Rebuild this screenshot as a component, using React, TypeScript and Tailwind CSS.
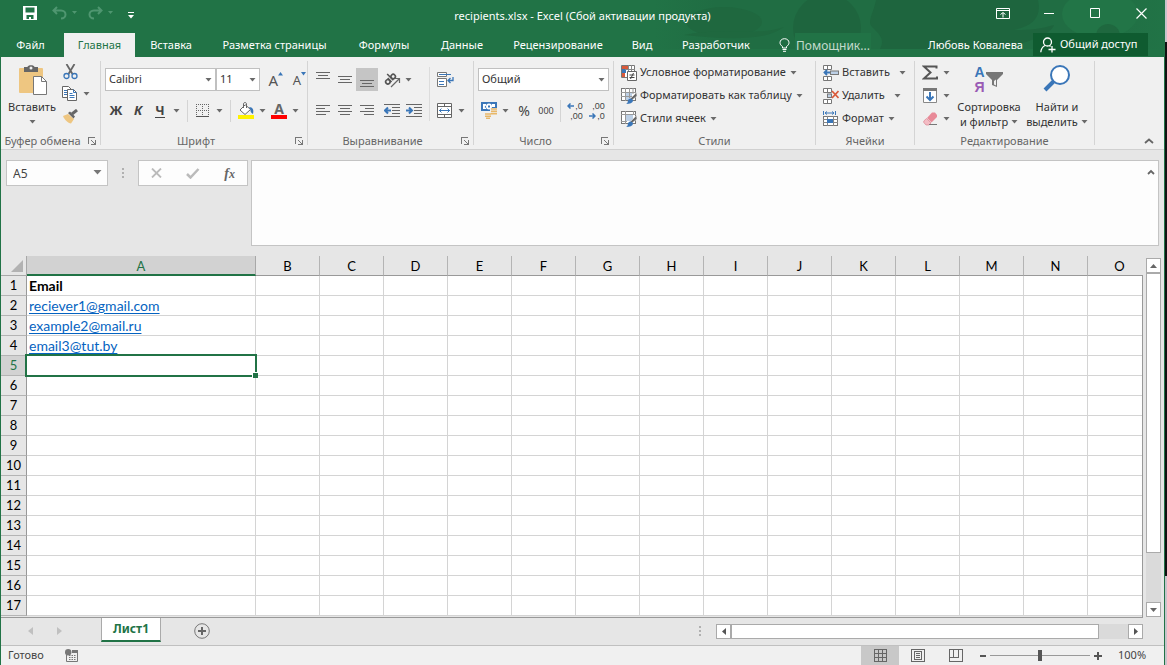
import type { ReactNode } from 'react';

const tabs: [string, string][] = [
  ['Файл', 'w-[59px]'],
  ['Главная', 'w-[71px]'],
  ['Вставка', 'w-[72px]'],
  ['Разметка страницы', 'w-[135px]'],
  ['Формулы', 'w-[84px]'],
  ['Данные', 'w-[72px]'],
  ['Рецензирование', 'w-[120px]'],
  ['Вид', 'w-[48px]'],
  ['Разработчик', 'w-[100px]'],
];

const columns = 'ABCDEFGHIJKLMNO'.split('');
const cells: Record<number, string> = {
  1: 'Email',
  2: 'reciever1@gmail.com',
  3: 'example2@mail.ru',
  4: 'email3@tut.by',
};
const rows = Array.from({ length: 17 }, (_, i) => i + 1);
const ACTIVE_ROW = 5;

function Svg({ w, h, children, crisp = false }: { w: number; h: number; children: ReactNode; crisp?: boolean }) {
  return (
    <svg width={w} height={h} viewBox={`0 0 ${w} ${h}`} fill="none" className="shrink-0" shapeRendering={crisp ? 'crispEdges' : 'auto'} aria-hidden="true">
      {children}
    </svg>
  );
}

function Caret() {
  return (
    <Svg w={7} h={4}>
      <path d="M.5 0h6L3.500 3.500z" fill="#6a6a6a" />
    </Svg>
  );
}

function CaretButton({ label, wide = false }: { label: string; wide?: boolean }) {
  return (
    <button aria-label={label} className={`flex h-[23px] items-center justify-center ${wide ? 'w-[14px]' : 'w-[11px]'}`}>
      <Caret />
    </button>
  );
}

function Tool({ label, children, active = false }: { label: string; children: ReactNode; active?: boolean }) {
  return (
    <button aria-label={label} className={`flex h-[23px] w-[22px] items-center justify-center ${active ? 'bg-[#c5c5c5]' : ''}`}>
      {children}
    </button>
  );
}

function Combo({ label, value, width }: { label: string; value: string; width: string }) {
  return (
    <div className={`relative h-[23px] ${width}`}>
      <select aria-label={label} defaultValue={value} className="h-full w-full appearance-none border border-[#c0c0c0] bg-white pl-[3px] text-[#333]">
        <option>{value}</option>
      </select>
      <span className="pointer-events-none absolute top-[10px] right-1">
        <Caret />
      </span>
    </div>
  );
}

function Divider() {
  return <div className="mr-1 ml-[5px] h-[22px] w-px bg-[#d4d4d4]" />;
}

function Group({ title, width, launcher = false, children }: { title: string; width: string; launcher?: boolean; children: ReactNode }) {
  return (
    <>
      <section aria-label={title} className={`flex shrink-0 flex-col pt-1 ${width}`}>
        <div className="flex h-[73px]">{children}</div>
        <div className="flex h-[14px] items-center text-[#666]">
          <h2 className="flex-1 text-center whitespace-nowrap">{title}</h2>
          {launcher && (
            <button aria-label={`${title}: параметры`} className="w-4 pl-1">
              <Svg w={8} h={8} crisp>
                <path d="M0.500 7V0.500H7M3 3l4 4M7.500 3v4.500H3" stroke="#777" />
              </Svg>
            </button>
          )}
        </div>
      </section>
      <div className="mt-1 h-[84px] w-px shrink-0 bg-[#d4d4d4]" />
    </>
  );
}

function Lines({ rows: list }: { rows: [number, number, number][] }) {
  return (
    <Svg w={14} h={16} crisp>
      {list.map(([x, y, w]) => (
        <rect key={y} x={x} y={y} width={w} height={1} fill="#666" />
      ))}
    </Svg>
  );
}

function Indent({ right = false }: { right?: boolean }) {
  return (
    <Svg w={16} h={14}>
      <path d="M0 .5h16M8 3.500h8M8 6.500h8M8 9.500h8M0 12.500h16" stroke="#666" shapeRendering="crispEdges" />
      {right ? <path d="M0 6.500h6M3 3.500l3 3-3 3" stroke="#3a76b8" strokeWidth="2" /> : <path d="M1 6.500h6M4 3.500l-3 3 3 3" stroke="#3a76b8" strokeWidth="2" />}
    </Svg>
  );
}

function StyleRow({ icon, text, gap }: { icon: ReactNode; text: string; gap: string }) {
  return (
    <button className="flex h-[23px] items-center whitespace-nowrap text-[#333]">
      {icon}
      <span className="ml-[3px]">{text}</span>
      <span className={gap}>
        <Caret />
      </span>
    </button>
  );
}

function TableBrush({ cell = false }: { cell?: boolean }) {
  return (
    <Svg w={16} h={16}>
      <rect x=".5" y=".5" width="14" height="12" fill="#fff" stroke="#777" />
      {cell ? (
        <>
          <rect x="4" y="4" width="8" height="6" fill="#bdd0e6" />
          <path d="M4.500 0v13M0 3.500h15M12.500 0v4M0 10.500h6" stroke="#999" />
        </>
      ) : (
        <>
          <rect x="5" y="5" width="6" height="7" fill="#bdd0e6" />
          <path d="M4.500 0v13M8.500 0v10M12 0v6M0 4.500h15M0 8.500h11" stroke="#999" />
        </>
      )}
      <path d="M15.500 4.500L9 11l1.500 1.500L16 8z" fill="#666" stroke="#f0f0f0" strokeWidth=".5" />
      <path d="M9.500 10.500c1.500 0 2.500 1 2.500 2.500-.5 2-3 3-7 3 2-1 1.500-2 2-3.500.3-1.200 1.300-2 2.500-2z" fill="#3a76b8" />
    </Svg>
  );
}

function CellsIcon({ kind }: { kind: 'insert' | 'delete' | 'format' }) {
  if (kind === 'format') {
    return (
      <Svg w={16} h={16}>
        <path d="M.5 0v4M12.500 0v4M2 2h9" stroke="#3a76b8" />
        <path d="M4 0.500L2 2 4 3.500M9 .5l2 1.500L9 3.500" stroke="#3a76b8" />
        <rect x=".5" y="5.500" width="14" height="9" fill="#fff" stroke="#777" />
        <path d="M4.500 5v10M10.500 5v10M0 8.500h15M0 11.500h15" stroke="#888" />
        <rect x="4" y="8" width="6" height="4" fill="#3a76b8" />
      </Svg>
    );
  }
  return (
    <Svg w={16} h={16}>
      <path d="M.5 .5h8v4h-8zM4.500 .5v4M.5 11.500h8v4h-8zM4.500 11.500v4" fill="#fff" stroke="#777" />
      {kind === 'insert' ? (
        <>
          <rect x="7.500" y="6" width="8" height="3.500" fill="#bdd0e6" stroke="#777" />
          <path d="M7 7.500H1M4 5L1.500 7.500 4 10" stroke="#3a76b8" strokeWidth="1.800" />
        </>
      ) : (
        <>
          <rect x="4.500" y="6" width="4" height="3.500" fill="#bdd0e6" stroke="#777" />
          <path d="M9 3l6.500 7M15.500 3L9 10" stroke="#d9593a" strokeWidth="1.700" />
        </>
      )}
    </Svg>
  );
}

function TitleBar() {
  return (
    <header className="relative bg-[#217346] text-white">
      <svg className="absolute top-0 right-0" width="510" height="57" viewBox="0 0 510 57" aria-hidden="true">
        <defs>
          <linearGradient id="shade" x1="0" x2="1" y1="0" y2="0">
            <stop offset="0" stopColor="#217346" />
            <stop offset=".12" stopColor="#206d43" />
            <stop offset=".85" stopColor="#206d43" />
            <stop offset="1" stopColor="#217346" />
          </linearGradient>
        </defs>
        <path d="M0 0h510v49H0z" fill="url(#shade)" />
        <ellipse cx="70" cy="22" rx="38" ry="15" fill="#1f683f" />
        <path d="M30 35c35-8 70 2 100-8-20 15-60 12-100 8z" fill="#1f683f" />
        <circle cx="173" cy="28" r="34" fill="#1e653e" />
        <path d="M222 0h162c4 18-6 26-24 30 16 0 26-1 40-5-4 12-40 24-80 24H226c8-14-10-20-10-26 0-7 4-12 6-23z" fill="#1e653e" />
        <ellipse cx="446" cy="14" rx="38" ry="24" fill="#227547" />
        <circle cx="454" cy="36" r="12" fill="#1f683f" />
        <path d="M0 49h510v8H0z" fill="#217346" />
      </svg>
      <div className="relative grid h-[33px] grid-cols-[1fr_auto_1fr] items-center">
        <div className="flex h-full items-start gap-[11px] pt-1 pl-[22px]">
          <button aria-label="Сохранить" className="mr-1 flex h-[18px] items-center">
            <Svg w={14} h={14}>
              <path d="M0 0h14v14H0z" fill="#fff" />
              <path d="M2.500 1.500h9v5h-9zM3.500 9h7v4H8v-2H6v2H3.500z" fill="#217346" />
            </Svg>
          </button>
          <div className="flex h-[18px] items-center gap-[5px] text-[#4f9670]">
            <button aria-label="Отменить">
              <Svg w={15} h={14}>
                <path d="M5 1L1.500 4.500 5 8M1.500 4.500H9c3 0 4.500 2 4.500 4S12 12.500 9 12.500" stroke="currentColor" strokeWidth="2" />
              </Svg>
            </button>
            <Svg w={5} h={4}><path d="M0 0h5L2.500 3z" fill="currentColor" /></Svg>
          </div>
          <div className="flex h-[18px] items-center gap-[5px] text-[#4f9670]">
            <button aria-label="Вернуть">
              <Svg w={15} h={14}>
                <path d="M10 1l3.500 3.500L10 8M13.500 4.500H6c-3 0-4.500 2-4.500 4s1.500 4 4.500 4" stroke="currentColor" strokeWidth="2" />
              </Svg>
            </button>
            <Svg w={5} h={4}><path d="M0 0h5L2.500 3z" fill="currentColor" /></Svg>
          </div>
          <button aria-label="Настройка панели быстрого доступа" className="ml-1 flex h-[22px] items-center">
            <Svg w={6} h={7}>
              <path d="M0 .5h6" stroke="#fff" />
              <path d="M0 3h6L3 6.500z" fill="#fff" />
            </Svg>
          </button>
        </div>
        <h1 className="whitespace-nowrap">recipients.xlsx - Excel (Сбой активации продукта)</h1>
        <div className="flex h-[26px] justify-end self-start">
          <button aria-label="Параметры отображения ленты" className="flex w-[46px] items-center justify-center">
            <Svg w={14} h={11}>
              <path d="M.5 .5h13v10H.5zM.5 2.500h13M7 9.500V5M4.500 6.500L7 4.500l2.500 2" stroke="#fff" />
            </Svg>
          </button>
          <button aria-label="Свернуть" className="flex w-[46px] items-center justify-center">
            <Svg w={11} h={11}><path d="M0 5.500h10" stroke="#fff" /></Svg>
          </button>
          <button aria-label="Развернуть" className="flex w-[46px] items-center justify-center">
            <Svg w={11} h={11}><path d="M.5 .5h9v9h-9z" stroke="#fff" /></Svg>
          </button>
          <button aria-label="Закрыть" className="flex w-[46px] items-center justify-center">
            <Svg w={11} h={11}><path d="M.5 .5l10 10M10.500 .5l-10 10" stroke="#fff" strokeWidth="1.200" /></Svg>
          </button>
        </div>
      </div>
      <nav className="relative flex h-6">
        {tabs.map(([name, width], i) => (
          <button key={name} className={`shrink-0 whitespace-nowrap ${width} ${i === 0 ? 'mr-1' : ''} ${i === 1 ? 'bg-[#f0f0f0] text-[#217346]' : ''}`}>
            {name}
          </button>
        ))}
        <button className="ml-[13px] flex items-center gap-[5px] whitespace-nowrap">
          <Svg w={11} h={14}>
            <path d="M3.500 10V8.500C2 7.500 1 6.300 1 4.700 1 2.400 2.900.7 5.500.7S10 2.400 10 4.700c0 1.600-1 2.800-2.500 3.800V10zM3.500 11.500h4M4 13.300h3" stroke="#fff" />
          </Svg>
          <span className="mb-[7px] h-[17px] w-[76px] self-start bg-[#217346] pt-1 pl-px text-left text-[12px] text-[#c3dbcd]">Помощник...</span>
        </button>
        <div className="ml-auto flex items-start pr-4">
          <button className="h-6 pr-[10px] whitespace-nowrap">Любовь Ковалева</button>
          <button className="flex h-[23px] w-[115px] items-center gap-1 bg-[#0f5b30] pl-[7px] whitespace-nowrap">
            <Svg w={16} h={16}>
              <circle cx="7.500" cy="5" r="4" stroke="#fff" strokeWidth="1.300" />
              <path d="M5 8.500C2 10 1 12 .8 15.300M9.500 8.500l1 1M12 9v6.500M8.500 12.500h7" stroke="#fff" strokeWidth="1.300" />
            </Svg>
            Общий доступ
          </button>
        </div>
      </nav>
    </header>
  );
}

function Ribbon() {
  return (
    <div className="flex h-[93px] border-b border-[#d0d0d0] bg-[#f0f0f0]">
      <Group title="Буфер обмена" width="w-[99px]" launcher>
        <button className="flex w-[60px] flex-col items-center pt-1 pl-[2px] text-[#333]">
          <Svg w={30} h={31}>
            <rect x="2" y="3" width="24" height="25" rx="1" fill="#eec681" />
            <path d="M7 2h3.500C10.500-.5 17.500-.5 17.500 2H21v5H7z" fill="#666" />
            <rect x="12.500" y="1.500" width="3" height="3" rx="1.500" fill="#f0f0f0" />
            <path d="M16.500 11.500h8l5 5v13h-13z" fill="#fff" stroke="#777" />
            <path d="M24.500 11.500v5h5" stroke="#777" />
          </Svg>
          <span className="mt-[3px] leading-[15px]">Вставить</span>
          <span className="mt-[6px]"><Caret /></span>
        </button>
        <div className="flex flex-col">
          <button aria-label="Вырезать" className="flex h-[21px] w-[18px] items-center justify-center">
            <Svg w={15} h={16}>
              <path d="M3.500 0l6 10M11.500 0l-6 10" stroke="#666" strokeWidth="1.800" />
              <circle cx="3.500" cy="12" r="2.500" stroke="#3a76b8" strokeWidth="1.300" />
              <circle cx="11.500" cy="12" r="2.500" stroke="#3a76b8" strokeWidth="1.300" />
            </Svg>
          </button>
          <div className="flex">
            <button aria-label="Копировать" className="flex h-[23px] w-[18px] items-center justify-center">
              <Svg w={16} h={15}>
                <path d="M.5 .5h6l3 3v8h-9z" fill="#fff" stroke="#666" />
                <path d="M2 4.500h4M2 6.500h4M2 8.500h4" stroke="#3a76b8" />
                <path d="M5.500 3.500h6l3 3v8h-9z" fill="#fff" stroke="#666" />
                <path d="M7.500 7.500h3M7.500 9.500h5M7.500 11.500h5M11.500 3.500v3h3" stroke="#3a76b8" />
              </Svg>
            </button>
            <CaretButton label="Варианты копирования" wide />
          </div>
          <button aria-label="Формат по образцу" className="flex h-[23px] w-[18px] items-center justify-center">
            <Svg w={17} h={15}>
              <path d="M1 7l5-2 6 5-3 4.500C6 14 2.500 11 1 7z" fill="#eec681" />
              <path d="M6 4l2-1.500 5 5-1.500 2z" fill="#666" />
              <path d="M10 5l5-4" stroke="#666" strokeWidth="3" />
            </Svg>
          </button>
        </div>
      </Group>

      <Group title="Шрифт" width="w-[206px]" launcher>
        <div className="flex flex-col gap-2 pt-[7px] pl-1">
          <div className="flex">
            <Combo label="Шрифт" value="Calibri" width="w-[111px]" />
            <Combo label="Размер шрифта" value="11" width="w-[44px]" />
            <button aria-label="Увеличить размер шрифта" className="flex h-[23px] w-[23px] items-center justify-end text-[15px] leading-[20px] text-[#555]">
              А<span className="self-start pt-1"><Svg w={5} h={4}><path d="M0 3.500L2.500 0 5 3.500z" fill="#3a76b8" /></Svg></span>
            </button>
            <button aria-label="Уменьшить размер шрифта" className="flex h-[23px] w-[23px] items-center justify-end text-[13px] leading-[20px] text-[#555]">
              А<span className="self-start pt-1"><Svg w={5} h={4}><path d="M0 0h5L2.500 3.500z" fill="#3a76b8" /></Svg></span>
            </button>
          </div>
          <div className="flex items-center text-[13px] font-bold text-[#444]">
            <Tool label="Полужирный">Ж</Tool>
            <Tool label="Курсив"><span className="italic">К</span></Tool>
            <Tool label="Подчёркнутый"><span className="border-b border-[#444] leading-[14px]">Ч</span></Tool>
            <CaretButton label="Варианты подчёркивания" />
            <Divider />
            <Tool label="Границы">
              <Svg w={14} h={14} crisp>
                <path d="M.5 0v12M6.500 0v12M12.500 0v12M0 .5h13M0 6.500h13" stroke="#666" strokeDasharray="1 1" />
                <path d="M0 12.500h13" stroke="#555" strokeWidth="1" />
              </Svg>
            </Tool>
            <CaretButton label="Варианты границ" />
            <Divider />
            <Tool label="Цвет заливки">
              <Svg w={17} h={17}>
                <path d="M7 3L2 8l5 4.500 5.500-5L7.500 3z" fill="#fff" stroke="#666" />
                <path d="M5.500 6V2c0-2 3-2 3 0v4" stroke="#666" />
                <path d="M11 5c4 0 5 3 4 7-1.500-1-3-2.500-2.500-4.500z" fill="#3a76b8" />
                <path d="M0 13h16v4H0z" fill="#fff200" />
              </Svg>
            </Tool>
            <CaretButton label="Другие цвета заливки" />
            <Tool label="Цвет текста">
              <span className="flex w-4 flex-col items-center border-b-4 border-[#f00] text-[14px] leading-[13px] text-[#666]">А</span>
            </Tool>
            <CaretButton label="Другие цвета текста" />
          </div>
        </div>
      </Group>

      <Group title="Выравнивание" width="w-[165px]" launcher>
        <div className="flex flex-col gap-2 pt-[7px] pl-1">
          <div className="flex">
            <Tool label="По верхнему краю"><Lines rows={[[0, 0, 14], [2, 3, 10], [0, 6, 14]]} /></Tool>
            <Tool label="По середине"><Lines rows={[[0, 4, 14], [2, 7, 10], [0, 10, 14]]} /></Tool>
            <Tool label="По нижнему краю" active><Lines rows={[[0, 8, 14], [2, 11, 10], [0, 14, 14]]} /></Tool>
            <div className="ml-[3px] flex">
              <Tool label="Ориентация">
                <Svg w={18} h={18}>
                  <g stroke="#555" strokeWidth="1.600" transform="rotate(-45 7 8)">
                    <circle cx="3.500" cy="8.500" r="2.200" />
                    <path d="M6 5.800v5.400M8.500 2.500v8.700" />
                    <circle cx="11" cy="8.500" r="2.200" />
                  </g>
                  <path d="M8 16l8-8M12 7.500h4.500V12" stroke="#666" strokeWidth="1.200" />
                </Svg>
              </Tool>
              <CaretButton label="Варианты ориентации" />
            </div>
          </div>
          <div className="flex">
            <Tool label="По левому краю"><Lines rows={[[0, 2, 14], [0, 5, 9], [0, 8, 14], [0, 11, 10]]} /></Tool>
            <Tool label="По центру"><Lines rows={[[0, 2, 14], [2, 5, 10], [0, 8, 14], [2, 11, 10]]} /></Tool>
            <Tool label="По правому краю"><Lines rows={[[0, 2, 14], [5, 5, 9], [0, 8, 14], [4, 11, 10]]} /></Tool>
            <div className="ml-[3px] flex">
              <Tool label="Уменьшить отступ"><Indent /></Tool>
              <Tool label="Увеличить отступ"><Indent right /></Tool>
            </div>
          </div>
        </div>
        <div className="mt-[6px] mr-1 ml-1 h-[54px] w-px bg-[#dcdcdc]" />
        <div className="flex flex-col gap-2 pt-[7px]">
          <Tool label="Перенос текста">
            <Svg w={17} h={16}>
              <path d="M.5 .5h9v4h-9zM.5 6.500h9v8h-9z" fill="#fff" stroke="#777" />
              <path d="M2 2.500h12M2 9.500h5M2 12.500h5" stroke="#3a76b8" />
              <path d="M16 5v3.500h-5M13.500 6L11 8.500 13.500 11" stroke="#3a76b8" strokeWidth="1.300" />
            </Svg>
          </Tool>
          <div className="flex">
            <Tool label="Объединить и поместить в центре">
              <Svg w={16} h={15}>
                <path d="M.5 .5h14v14H.5zM.5 3.500h14M.5 11.500h14M7.500 .5v3M7.500 11.500v3" fill="#fff" stroke="#666" />
                <path d="M2 7.500h11M4.500 5.500l-2 2 2 2M10.500 5.500l2 2-2 2" stroke="#3a76b8" />
              </Svg>
            </Tool>
            <CaretButton label="Варианты объединения" />
          </div>
        </div>
      </Group>

      <Group title="Число" width="w-[139px]" launcher>
        <div className="flex flex-col gap-2 pt-[7px] pl-1">
          <Combo label="Числовой формат" value="Общий" width="w-[131px]" />
          <div className="flex items-center text-[#444]">
            <Tool label="Финансовый формат">
              <Svg w={17} h={17}>
                <path d="M0 0h16v9H0z" fill="#3a76b8" />
                <path d="M2 2h3v1.500L3.500 5 5 6v1H2zM11 2h3v3h-3z" fill="#fff" />
                <circle cx="8" cy="4.500" r="3" fill="#fff" />
                <path d="M7 3.500h2v2H7z" fill="#3a76b8" />
                <path d="M9 6h8v8H9zM3 11h7v6H3z" fill="#f0f0f0" />
                <path d="M10 7h6M10 9.300h6M4 12h6M4 14.200h6M10 11.600h6M5 16.400h4" stroke="#e8b768" strokeWidth="1.600" />
              </Svg>
            </Tool>
            <CaretButton label="Другие валюты" />
            <button aria-label="Процентный формат" className="ml-[2px] h-[23px] w-[22px] text-[14px]">%</button>
            <button aria-label="Формат с разделителями" className="h-[23px] w-[22px] text-[9px]">000</button>
            <div className="mx-[3px] h-[22px] w-px bg-[#d4d4d4]" />
            <Tool label="Увеличить разрядность">
              <span className="flex flex-col items-end font-['Liberation_Sans',sans-serif] text-[9px] leading-[10px]">
                <span className="flex items-center gap-px"><Svg w={7} h={6}><path d="M7 3H1M3.500 .5L1 3l2.500 2.500" stroke="#3a76b8" strokeWidth="1.500" /></Svg>,0</span>
                <span>,00</span>
              </span>
            </Tool>
            <Tool label="Уменьшить разрядность">
              <span className="flex flex-col items-end font-['Liberation_Sans',sans-serif] text-[9px] leading-[10px]">
                <span>,00</span>
                <span className="flex items-center gap-px"><Svg w={7} h={6}><path d="M0 3h6M3.500 .5L6 3 3.500 5.500" stroke="#3a76b8" strokeWidth="1.500" /></Svg>,0</span>
              </span>
            </Tool>
          </div>
        </div>
      </Group>

      <Group title="Стили" width="w-[201px]">
        <div className="flex flex-col items-start pl-[7px]">
          <StyleRow
            text="Условное форматирование"
            gap="ml-1"
            icon={
              <Svg w={16} h={16}>
                <path d="M.5 .5h13v12H.5z" fill="#fff" stroke="#777" />
                <path d="M1 1h6v3H1zM1 8h3v4H1z" fill="#d9593a" />
                <path d="M1 4h4v4H1z" fill="#3a76b8" />
                <path d="M7.500 0v6M10.500 0v6M4 4.500h10" stroke="#888" />
                <path d="M6.500 6.500h9v9h-9z" fill="#fff" stroke="#666" />
                <path d="M8.500 10h5M8.500 12.500h5M12.500 8l-3 6" stroke="#444" />
              </Svg>
            }
          />
          <StyleRow text="Форматировать как таблицу" gap="ml-1" icon={<TableBrush />} />
          <StyleRow text="Стили ячеек" gap="ml-1" icon={<TableBrush cell />} />
        </div>
      </Group>

      <Group title="Ячейки" width="w-[98px]">
        <div className="flex flex-col items-start pl-[7px]">
          <StyleRow text="Вставить" gap="ml-[9px]" icon={<CellsIcon kind="insert" />} />
          <StyleRow text="Удалить" gap="ml-[9px]" icon={<CellsIcon kind="delete" />} />
          <StyleRow text="Формат" gap="ml-1" icon={<CellsIcon kind="format" />} />
        </div>
      </Group>

      <Group title="Редактирование" width="w-[179px]">
        <div className="flex flex-col pl-1">
          <div className="flex">
            <Tool label="Сумма">
              <Svg w={16} h={16}>
                <path d="M14.500 3.500V1.500H2l6.500 6L2 13.500h13v-2" stroke="#555" strokeWidth="2" />
              </Svg>
            </Tool>
            <CaretButton label="Другие функции" />
          </div>
          <div className="flex">
            <Tool label="Заполнить">
              <Svg w={14} h={16}>
                <path d="M.5 1.500h13v13H.5z" fill="#fff" stroke="#888" />
                <path d="M0 0h14v3H0z" fill="#777" />
                <path d="M7 4v8M3.500 8.500L7 12l3.500-3.500" stroke="#3a76b8" strokeWidth="2" />
              </Svg>
            </Tool>
            <CaretButton label="Варианты заполнения" />
          </div>
          <div className="flex">
            <Tool label="Очистить">
              <Svg w={15} h={14}>
                <path d="M9 .5h3L14 3v2L8.500 10.500 4 6z" fill="#e88a98" />
                <path d="M3.500 6.500L8 11l-2 2H3L.8 10.500V9z" fill="#f3bcc4" stroke="#d87888" strokeWidth=".6" />
                <path d="M6 12.500h8" stroke="#777" />
              </Svg>
            </Tool>
            <CaretButton label="Варианты очистки" />
          </div>
        </div>
        <button className="ml-[3px] flex w-[68px] flex-col items-center pt-1 whitespace-nowrap text-[#333]">
          <span className="flex h-[31px]">
            <span className="flex flex-col font-['Liberation_Sans',sans-serif] text-[14px] leading-[14px] font-bold">
              <span className="h-[15px] text-[#3a76b8]">А</span>
              <span className="h-[15px] text-[#9a5bb5]">Я</span>
            </span>
            <Svg w={19} h={26}>
              <path d="M1 7h17v2l-6 6v7l-5-2v-5L1 9z" fill="#777" />
              <path d="M9 16l2-1.500v6l-2-1z" fill="#f0f0f0" />
            </Svg>
          </span>
          <span className="mt-[3px] leading-[15px]">Сортировка</span>
          <span className="flex items-center gap-[3px] leading-[15px]">и фильтр <Caret /></span>
        </button>
        <button className="flex w-[68px] flex-col items-center pt-1 whitespace-nowrap text-[#333]">
          <Svg w={28} h={31}>
            <circle cx="17" cy="10" r="9" fill="#fff" stroke="#3a76b8" strokeWidth="2" />
            <path d="M10.500 16.500L2 25" stroke="#3a76b8" strokeWidth="4" />
          </Svg>
          <span className="mt-[3px] leading-[15px]">Найти и</span>
          <span className="flex items-center gap-[3px] leading-[15px]">выделить <Caret /></span>
        </button>
      </Group>
      <button aria-label="Свернуть ленту" className="mr-[10px] ml-auto self-end pb-[5px]">
        <Svg w={10} h={6}><path d="M1 5l4-3.500L9 5" stroke="#666" strokeWidth="1.800" /></Svg>
      </button>
    </div>
  );
}

function Dots() {
  return (
    <Svg w={2} h={10} crisp>
      <path d="M0 0h2v2H0zM0 4h2v2H0zM0 8h2v2H0z" fill="#b0b0b0" />
    </Svg>
  );
}

function FormulaBar() {
  return (
    <div className="flex items-start pt-[10px] pr-[5px] pb-[10px] pl-[5px]">
      <div className="relative h-[26px] w-[102px]">
        <input aria-label="Имя" defaultValue="A5" className="h-full w-full border border-[#c4c4c4] bg-[#fdfdfd] pl-[6px] text-[12px] text-[#444]" />
        <button aria-label="Список имён" className="absolute top-[10px] right-[6px]">
          <Svg w={9} h={5}><path d="M.5 0h8L4.500 4.500z" fill="#777" /></Svg>
        </button>
      </div>
      <div className="flex h-[26px] w-[30px] items-center justify-center"><Dots /></div>
      <div className="flex h-[26px] w-[110px] items-center justify-around border border-[#c4c4c4] bg-[#fdfdfd]">
        <button aria-label="Отмена">
          <Svg w={11} h={10}><path d="M1 .5l9 9M10 .5l-9 9" stroke="#bbb" strokeWidth="1.800" /></Svg>
        </button>
        <button aria-label="Ввод">
          <Svg w={14} h={11}><path d="M1 6l3.500 3.500L12.500 1" stroke="#bbb" strokeWidth="2.500" /></Svg>
        </button>
        <button aria-label="Вставить функцию" className="font-['Liberation_Serif',serif] text-[14px] font-bold text-[#666] italic">
          f<span className="text-[12px]">x</span>
        </button>
      </div>
      <div className="relative ml-[3px] h-[86px] flex-1">
        <textarea aria-label="Строка формул" className="block h-full w-full resize-none border border-[#c4c4c4] bg-[#fdfdfd] p-1" />
        <button aria-label="Свернуть строку формул" className="absolute top-[9px] right-[4px]">
          <Svg w={8} h={6}><path d="M1 5l3-3 3 3" stroke="#666" strokeWidth="1.800" /></Svg>
        </button>
      </div>
    </div>
  );
}

function Sheet() {
  return (
    <main className="flex flex-1">
      <div className="relative min-w-0 flex-1 overflow-hidden">
        <table className="w-[1150px] table-fixed border-separate border-spacing-0 font-['Lato','Noto_Sans',sans-serif] text-[14px] leading-[19px] text-black">
          <colgroup>
            <col className="w-[26px]" />
            <col className="w-[229px]" />
            {columns.slice(1).map((c) => (
              <col key={c} className="w-[64px]" />
            ))}
          </colgroup>
          <thead className="text-[13px]">
            <tr className="h-5">
              <th aria-label="Выделить всё" className="border-r border-b border-[#a8a8a8] p-0 align-bottom">
                <div className="flex justify-end pr-[3px] pb-[3px]">
                  <Svg w={12} h={12}><path d="M12 0v12H0z" fill="#b2b2b2" /></Svg>
                </div>
              </th>
              {columns.map((c, i) => (
                <th
                  key={c}
                  scope="col"
                  className={
                    i === 0
                      ? 'border-r border-b-2 border-r-[#a8a8a8] border-b-[#217346] bg-[#d2d2d2] p-0 align-bottom leading-[15px] font-normal text-[#217346]'
                      : 'border-r border-b border-r-[#b4b4b4] border-b-[#999] p-0 align-bottom leading-[17px] font-normal'
                  }
                >
                  {c}
                </th>
              ))}
            </tr>
          </thead>
          <tbody>
            {rows.map((r) => (
              <tr key={r} className="h-5">
                <th
                  scope="row"
                  className={`border-r border-b border-r-[#999] border-b-[#b4b4b4] p-0 text-[13px] font-normal ${r === ACTIVE_ROW ? 'bg-[#d2d2d2] text-[#217346]' : ''}`}
                >
                  {r}
                </th>
                {columns.map((c, i) => (
                  <td key={c} className="relative border-r border-b border-[#d4d4d4] bg-white p-0">
                    {i === 0 && r === 1 && <span className="pl-[2px] font-bold">{cells[r]}</span>}
                    {i === 0 && r > 1 && cells[r] && (
                      <a href={`mailto:${cells[r]}`} className="ml-[2px] text-[#0563c1] underline underline-offset-2">
                        {cells[r]}
                      </a>
                    )}
                    {i === 0 && r === ACTIVE_ROW && (
                      <span className="absolute -inset-[2px] z-10 border-2 border-[#217346]">
                        <span className="absolute -right-[3px] -bottom-[3px] size-[6px] border-t border-l border-white bg-[#217346]" />
                      </span>
                    )}
                  </td>
                ))}
              </tr>
            ))}
          </tbody>
        </table>
        <div className="absolute top-[19px] right-0 bottom-0 w-px bg-[#999]" />
      </div>
      <div className="flex w-[21px] flex-col px-[3px] pt-[2px]">
        <button aria-label="Прокрутить вверх" className="flex h-[15px] items-center justify-center border border-[#aaa] bg-white">
          <Svg w={7} h={4}><path d="M0 4L3.500 0 7 4z" fill="#666" /></Svg>
        </button>
        <div className="flex-1 bg-[#dadada]">
          <div className="h-[280px] border border-[#aaa] bg-white" />
        </div>
        <button aria-label="Прокрутить вниз" className="flex h-[15px] items-center justify-center border border-[#aaa] bg-white">
          <Svg w={7} h={4}><path d="M0 0h7L3.500 4z" fill="#666" /></Svg>
        </button>
      </div>
    </main>
  );
}

function SheetTabs() {
  return (
    <div className="flex h-7 items-start">
      <div className="flex h-full w-full items-start border-t border-[#999]">
        <div className="flex h-[26px] w-[100px] items-center gap-6 pl-[27px]">
          <button aria-label="Предыдущий лист"><Svg w={5} h={8}><path d="M5 0v8L0 4z" fill="#c0c0c0" /></Svg></button>
          <button aria-label="Следующий лист"><Svg w={5} h={8}><path d="M0 0v8l5-4z" fill="#c0c0c0" /></Svg></button>
        </div>
        <button className="h-[24px] w-[60px] border-x border-b-2 border-x-[#aaa] border-b-[#217346] bg-white text-[12px] font-bold text-[#217346]">Лист1</button>
        <button aria-label="Новый лист" className="mt-[5px] ml-[33px]">
          <Svg w={16} h={16}>
            <circle cx="8" cy="8" r="7.300" stroke="#777" />
            <path d="M8 4v8M4 8h8" stroke="#666" strokeWidth="2" />
          </Svg>
        </button>
        <div className="ml-auto flex h-[26px] items-center">
          <Dots />
          <div className="ml-[15px] flex h-[15px] w-[427px]">
            <button aria-label="Прокрутить влево" className="flex w-[15px] items-center justify-center border border-[#aaa] bg-white">
              <Svg w={4} h={7}><path d="M4 0v7L0 3.500z" fill="#555" /></Svg>
            </button>
            <div className="flex-1 bg-[#dadada]">
              <div className="h-full w-[368px] border border-[#aaa] bg-white" />
            </div>
            <button aria-label="Прокрутить вправо" className="flex w-[15px] items-center justify-center border border-[#aaa] bg-white">
              <Svg w={4} h={7}><path d="M0 0v7l4-3.500z" fill="#555" /></Svg>
            </button>
          </div>
        </div>
      </div>
      <div className="w-[21px] shrink-0" />
    </div>
  );
}

function StatusBar() {
  return (
    <footer className="flex h-5 items-center border-t border-[#c0c0c0] bg-[#f0f0f0] text-[#444]">
      <span className="pl-[7px]">Готово</span>
      <button aria-label="Запись макроса" className="ml-[21px]">
        <Svg w={13} h={13}>
          <path d="M7 1h6v3H7z" fill="#777" />
          <path d="M1.500 6v6.500h11V1" stroke="#777" />
          <path d="M4 6.500h7M4 8.500h7M4 10.500h7" stroke="#777" strokeDasharray="1.500 1" />
          <circle cx="3.200" cy="3.200" r="3.200" fill="#777" />
        </Svg>
      </button>
      <div className="ml-auto flex h-full items-center">
        <button aria-label="Обычный" className="flex h-full w-[38px] items-center justify-center bg-[#c8c8c8]">
          <Svg w={13} h={13} crisp><path d="M.5 .5h12v12H.5zM4.500 0v13M8.500 0v13M0 4.500h13M0 8.500h13" stroke="#666" /></Svg>
        </button>
        <button aria-label="Разметка страницы" className="flex h-full w-[38px] items-center justify-center">
          <Svg w={14} h={13} crisp><path d="M.5 .5h13v12H.5zM3.500 2.500h7v8h-7zM5 4.500h4M5 6.500h4M5 8.500h4" stroke="#666" /></Svg>
        </button>
        <button aria-label="Страничный режим" className="flex h-full w-[38px] items-center justify-center">
          <Svg w={14} h={13} crisp><path d="M.5 .5h13v12H.5zM4.500 0v8M9.500 0v8M0 8.500h10" stroke="#666" /></Svg>
        </button>
        <button aria-label="Уменьшить масштаб" className="ml-[5px]">
          <Svg w={6} h={8} crisp><path d="M0 3h6v2H0z" fill="#555" /></Svg>
        </button>
        <input
          type="range"
          aria-label="Масштаб"
          min={0}
          max={100}
          defaultValue={50}
          className="mx-1 h-3 w-[100px] appearance-none bg-transparent [&::-webkit-slider-runnable-track]:h-px [&::-webkit-slider-runnable-track]:bg-[#999] [&::-webkit-slider-thumb]:-mt-[5px] [&::-webkit-slider-thumb]:h-[11px] [&::-webkit-slider-thumb]:w-1 [&::-webkit-slider-thumb]:appearance-none [&::-webkit-slider-thumb]:bg-[#555]"
        />
        <button aria-label="Увеличить масштаб">
          <Svg w={8} h={8} crisp><path d="M0 3h8v2H0zM3 0h2v8H3z" fill="#555" /></Svg>
        </button>
        <span className="w-[62px] pl-4">100%</span>
      </div>
    </footer>
  );
}

export default function App() {
  return (
    <div className="flex min-h-screen font-['Noto_Sans','Open_Sans',sans-serif] text-[11px]">
      <div className="flex min-w-0 flex-1 flex-col border-x border-[#217346] bg-[#e6e6e6]">
        <TitleBar />
        <Ribbon />
        <FormulaBar />
        <Sheet />
        <SheetTabs />
        <StatusBar />
      </div>
      <div className="flex w-[2px] flex-col bg-[#c9c3cb]">
        <div className="mt-[42px] mb-[89px] flex-1 bg-[#111]" />
      </div>
    </div>
  );
}
